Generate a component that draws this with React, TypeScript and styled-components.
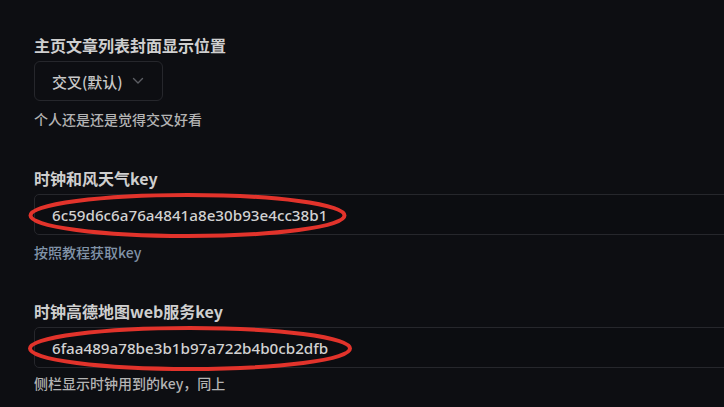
import React from "react";
import styled, { createGlobalStyle } from "styled-components";

const Global = createGlobalStyle`
  html, body { margin: 0; padding: 0; background: #0d0e12; overflow: hidden; }
  body { font-family: "Noto Sans", "Noto Sans CJK SC", sans-serif; }
`;

const Page = styled.div`
  width: 724px;
  height: 407px;
  overflow: hidden;
  padding: 34px 0 0 34px;
  box-sizing: border-box;
  display: flex;
  flex-direction: column;
  gap: 38px;
`;

const Section = styled.section`
  display: flex;
  flex-direction: column;
  align-items: flex-start;
`;

const Label = styled.div`
  font-family: "Noto Sans CJK SC", "Noto Sans", sans-serif;
  font-size: 16px;
  font-weight: 700;
  line-height: 22px;
  color: #cfcfcf;
  margin-bottom: 5px;
`;

const SelectBox = styled.div`
  height: 40px;
  width: 129px;
  box-sizing: border-box;
  border: 1px solid #26272c;
  border-radius: 6px;
  display: flex;
  align-items: center;
  padding-left: 17px;
  gap: 9px;
  font-family: "Noto Sans CJK SC", sans-serif;
  font-size: 15px;
  font-weight: 500;
  color: #c8c8c8;
`;

const Help = styled.div<{ $link?: boolean; $gap: number }>`
  font-family: "Noto Sans CJK SC", sans-serif;
  font-size: 14px;
  font-weight: 500;
  line-height: 20px;
  margin-top: ${(p) => p.$gap}px;
  color: ${(p) => (p.$link ? "#8193a8" : "#b4b4b4")};
`;

const InputWrap = styled.div`
  position: relative;
  width: calc(100% + 40px);
`;

const Input = styled.div`
  height: 41px;
  box-sizing: border-box;
  border: 1px solid #26272c;
  border-radius: 5px;
  display: flex;
  align-items: center;
  padding-left: 17px;
  font-family: "Noto Sans", sans-serif;
  font-size: 15.2px;
  font-weight: 500;
  color: #d2d2d2;
  background: #0c0d11;
`;

const Ring = styled.svg`
  position: absolute;
  left: 0;
  top: 0;
  overflow: visible;
  pointer-events: none;
`;

const Chevron = () => (
  <svg width="12" height="8" viewBox="0 0 12 8" fill="none">
    <path d="M1.5 1.5 L6 6 L10.5 1.5" stroke="#5c5e64" strokeWidth="1.4" strokeLinecap="round" strokeLinejoin="round" />
  </svg>
);

const KeyField = ({ value, cx, rx }: { value: string; cx: number; rx: number }) => (
  <InputWrap>
    <Input>{value}</Input>
    <Ring width="1" height="1">
      <ellipse cx={cx} cy={21.5} rx={rx} ry={20.5} fill="none" stroke="#e2332b" strokeWidth="4" />
    </Ring>
  </InputWrap>
);

export default function App() {
  return (
    <>
      <Global />
      <Page>
        <Section>
          <Label>主页文章列表封面显示位置</Label>
          <SelectBox>
            <span>交叉(默认)</span>
            <Chevron />
          </SelectBox>
          <Help $gap={8}>个人还是还是觉得交叉好看</Help>
        </Section>
        <Section>
          <Label>时钟和风天气key</Label>
          <KeyField value="6c59d6c6a76a4841a8e30b93e4cc38b1" cx={153.5} rx={157} />
          <Help $link $gap={7}>按照教程获取key</Help>
        </Section>
        <Section>
          <Label>时钟高德地图web服务key</Label>
          <KeyField value="6faa489a78be3b1b97a722b4b0cb2dfb" cx={156} rx={160} />
          <Help $gap={5}>侧栏显示时钟用到的key，同上</Help>
        </Section>
      </Page>
    </>
  );
}
